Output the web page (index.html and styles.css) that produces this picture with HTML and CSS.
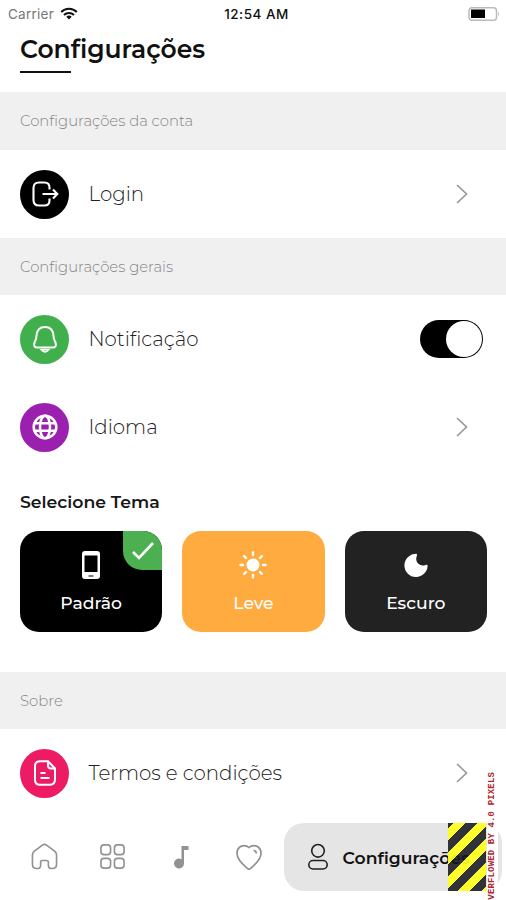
FILE: index.html
```html
<!DOCTYPE html>
<html lang="pt">
<head>
<meta charset="utf-8">
<title>Configurações</title>
<link rel="stylesheet" href="styles.css">
</head>
<body>
<div class="screen">
  <header class="status">
    <div class="carrier"><span>Carrier</span>
      <svg width="18" height="13" viewBox="0 0 18 13"><path d="M1.2 5a11 11 0 0 1 15.6 0M4 8a7 7 0 0 1 10 0" fill="none" stroke="#111" stroke-width="2"/><path d="M6.3 9.8a4 4 0 0 1 5.4 0L9 12.5z" fill="#111"/></svg>
    </div>
    <span class="clock">12:54 AM</span>
    <svg class="battery" width="32" height="14" viewBox="0 0 32 14"><rect x="1" y=".8" width="27.5" height="12.4" rx="3" fill="#fff" stroke="#bbb" stroke-width="1.500"/><rect x="3" y="2.500" width="14" height="8.500" fill="#000"/><path d="M30 5v4q2-2 0-4" fill="#bbb"/></svg>
  </header>
  <div class="heading"><h1>Configurações</h1></div>

  <h2 class="band"><span>Configurações da conta</span></h2>
  <div class="row">
    <span class="dot black"><svg width="30" height="30" viewBox="0 0 30 30"><path d="M19.500 10.500V8.500Q19.500 3.500 14.500 3.500H9Q3.500 3.500 3.500 9v12q0 5.500 5.500 5.500h5.500Q19.500 26.500 19.500 21.500v-2M12.500 15H27M23 10.500l4.300 4.500-4.300 4.500" fill="none" stroke="#fff" stroke-width="2.100"/></svg></span>
    <span class="label">Login</span>
    <svg class="chev" width="12" height="20" viewBox="0 0 12 20"><path d="M1 1l9.500 9L1 19" /></svg>
  </div>

  <h2 class="band short"><span>Configurações gerais</span></h2>
  <div class="row">
    <span class="dot green"><svg width="28" height="30" viewBox="0 0 28 30"><path d="M14 3C8.500 3 5.800 6.500 5.500 12Q5.400 14.800 3.700 18C2.200 21.700 3.200 23.500 7 23.500h14c3.800 0 4.800-1.800 3.300-5.500Q22.600 14.800 22.500 12C22.200 6.500 19.500 3 14 3z" fill="none" stroke="#fff" stroke-width="2"/><path d="M10.300 25.800q3.700 4.400 7.400 0z" fill="none" stroke="#fff" stroke-width="1.600"/></svg></span>
    <span class="label">Notificação</span>
    <span class="switch"><i></i></span>
  </div>
  <div class="row">
    <span class="dot purple"><svg width="26" height="26" viewBox="0 0 26 26"><g fill="none" stroke="#fff" stroke-width="2.500"><circle cx="13" cy="13" r="11.300"/><ellipse cx="13" cy="13" rx="5" ry="11.300"/><path d="M2.500 9.200h21M2.500 16.800h21"/></g></svg></span>
    <span class="label">Idioma</span>
    <svg class="chev" width="12" height="20" viewBox="0 0 12 20"><path d="M1 1l9.500 9L1 19" /></svg>
  </div>

  <h3 class="theme-title"><span>Selecione Tema</span></h3>
  <div class="themes">
    <div class="theme standard">
      <svg width="20" height="30" viewBox="0 0 20 30"><path fill-rule="evenodd" d="M4 1h12q3 0 3 3v22q0 3-3 3H4q-3 0-3-3V4q0-3 3-3zM3.500 5.500v16.500h13V5.500zM7.500 25.500v1h5v-1z" fill="#fff"/></svg>
      <span>Padrão</span>
      <span class="tick"><svg width="22" height="18" viewBox="0 0 22 18"><path d="M1 10l6 6L21 1" fill="none" stroke="#fff" stroke-width="2.600"/></svg></span>
    </div>
    <div class="theme light">
      <svg width="30" height="30" viewBox="0 0 30 30"><circle cx="15" cy="15" r="6.500" fill="#fff"/><path d="M15 2.500v2.500M15 25v2.500M2.500 15h2.500M25 15h2.500M6.200 6.200l1.800 1.800M22 22l1.800 1.800M6.200 23.800l1.800-1.800M22 8l1.800-1.800" stroke="#fff" stroke-width="2.400" stroke-linecap="round"/></svg>
      <span>Leve</span>
    </div>
    <div class="theme dark">
      <svg width="30" height="30" viewBox="0 0 30 30"><path d="M15.500 3.800A11.600 11.600 0 1 0 26.600 15.300Q25.800 14.300 24.500 15Q20.500 16.500 17.300 13.800Q14 10.500 15.800 6Q16.500 4.500 15.500 3.800z" fill="#fff"/></svg>
      <span>Escuro</span>
    </div>
  </div>

  <h2 class="band short"><span>Sobre</span></h2>
  <div class="row">
    <span class="dot pink"><svg width="24" height="26" viewBox="0 0 24 26"><path d="M7 1.200h8L22 8.500V19q0 5.800-5 5.800H7q-5 0-5-5V6.200Q2 1.200 7 1.200zM15 1.200V5.500q0 3 3 3h4M7.500 13h5M7.500 18h9" fill="none" stroke="#fff" stroke-width="2"/></svg></span>
    <span class="label">Termos e condições</span>
    <svg class="chev" width="12" height="20" viewBox="0 0 12 20"><path d="M1 1l9.500 9L1 19" /></svg>
  </div>

  <nav class="tabs">
    <span class="tab"><svg width="27" height="27" viewBox="0 0 28 28"><path d="M11.800 2.200L3.500 8.500Q1.500 10 1.500 12.500V22q0 4.500 4.500 4.500 4 0 4-3.500v-3q0-1.800 1.800-1.800h4.400q1.800 0 1.800 1.800v3q0 3.500 4 3.500 4.500 0 4.500-4.500v-9.500Q26.500 10 24.500 8.500L16.200 2.200Q14 .7 11.800 2.200z"/></svg></span>
    <span class="tab"><svg width="27" height="27" viewBox="0 0 28 28"><rect x="2" y="2" width="10" height="10" rx="3.200"/><rect x="16" y="2" width="10" height="10" rx="3.200"/><rect x="2" y="16" width="10" height="10" rx="3.200"/><rect x="16" y="16" width="10" height="10" rx="3.200"/></svg></span>
    <span class="tab"><svg width="28" height="28" viewBox="0 0 28 28"><path class="solid" d="M14.500 3h7v4h-4.500v13.500A5 5 0 1 1 14.500 16.200z"/></svg></span>
    <span class="tab"><svg width="28" height="28" viewBox="0 0 28 28"><path d="M14 4.500C10 .8 2 2.500 2 10.500 2 17 9 22.500 12.500 25.500q1.500 1.200 3 0C19 22.500 26 17 26 10.500 26 2.500 18 .8 14 4.500zM18.500 7.500q2.500 0 3 3"/></svg></span>
    <div class="active">
      <svg width="22" height="28" viewBox="0 0 22 28"><circle cx="11" cy="7.800" r="6.300"/><rect x="1.800" y="17.500" width="18.400" height="8.500" rx="4.250"/></svg>
      <span>Configurações</span>
      <div class="overflow"><div class="stripes"></div><span class="warning">VERFLOWED BY 4.0 PIXELS</span></div>
    </div>
  </nav>
</div>
</body>
</html>
```
FILE: styles.css
```css
* { box-sizing: border-box; }
body { margin: 0; background: #fff; font-family: Montserrat, Inter, "Open Sans", sans-serif; }
.screen { width: 506px; height: 900px; overflow: hidden; display: flex; flex-direction: column; background: #fff; }
svg { display: block; flex: none; }
span { white-space: nowrap; }
.status { height: 27px; display: grid; grid-template-columns: 1fr auto 1fr; align-items: center; padding: 0 6px 0 8px; font-family: Inter, sans-serif; font-size: 13.5px; flex: none; }
.carrier { display: flex; gap: 6px; align-items: center; color: #777; letter-spacing: .25px; }
.clock { font-weight: 500; color: #111; letter-spacing: .5px; margin-left: 5px; }
.battery { justify-self: end; }
.heading { height: 65px; padding: 5px 20px 0; flex: none; }
h1 { margin: 0; font-size: 25px; line-height: 34px; font-weight: 600; color: #111; }
.heading::after { content: ""; display: block; width: 51px; height: 2px; margin-top: 5px; background: #111; }
.band { height: 58px; margin: 0; padding-left: 20px; display: flex; align-items: center; background: #f0f0f0; color: #858585; font-size: 14.85px; font-weight: 300; flex: none; }
.short { height: 57px; }
.row { height: 88px; padding: 0 38px 0 20px; display: flex; align-items: center; flex: none; }
.dot { width: 49px; height: 49px; border-radius: 50%; display: flex; align-items: center; justify-content: center; }
.black { background: #000; }
.green { background: #41af4b; }
.purple { background: #9c20b0; }
.pink { background: #ec1b64; }
.label { margin: 0 0 1px 19.5px; flex: 1; font-size: 19.8px; font-weight: 300; color: #222; }
.chev { fill: none; stroke: #999; stroke-width: 1.7; }
.switch { width: 63px; height: 38px; margin-right: -15px; padding: 1px; border-radius: 19px; background: #000; display: flex; justify-content: flex-end; }
.switch i { width: 36px; height: 36px; border-radius: 50%; background: #fff; }
.theme-title { height: 60px; margin: 0; padding: 18px 20px 0; font-size: 17.3px; line-height: 26px; font-weight: 600; color: #181818; flex: none; }
.themes { height: 141px; padding: 0 19px 40px 20px; display: grid; grid-template-columns: repeat(3, 1fr); gap: 20px; flex: none; }
.theme { position: relative; border-radius: 19px; overflow: hidden; display: flex; flex-direction: column; align-items: center; padding-top: 19px; gap: 11px; color: #fff; font-size: 17.2px; line-height: 24px; font-weight: 550; }
.standard { background: #000; }
.light { background: #ffab40; }
.dark { background: #222; }
.tick { position: absolute; top: 0; right: 0; width: 39px; height: 39px; background: #4caf50; border-bottom-left-radius: 19px; display: flex; align-items: center; justify-content: center; }
.tabs { height: 83px; padding: 6px 4px 10px 10px; display: flex; flex: none; }
.tab { width: 68.4px; display: flex; align-items: center; justify-content: center; }
.tab svg { fill: none; stroke: #929292; stroke-width: 1.7; }
.tab .solid { fill: #929292; stroke: none; }
.active { position: relative; width: 218px; height: 68px; flex: none; padding-left: 23px; display: flex; align-items: center; gap: 14px; background: #e5e5e5; border-radius: 20px; font-size: 17.2px; font-weight: 600; color: #111; }
.active svg { fill: none; stroke: #222; stroke-width: 1.6; }
.overflow { position: absolute; left: 164px; top: -51px; height: 129px; display: flex; align-items: flex-start; gap: 1px; }
.stripes { width: 38px; height: 68px; margin-top: 51px; background: repeating-linear-gradient(135deg, rgba(20,20,28,.86) 0 4px, rgba(255,255,30,.93) 4px 12.5px, rgba(20,20,28,.86) 12.5px 17px); }
.warning { writing-mode: vertical-rl; transform: rotate(180deg); font-family: "Liberation Mono", monospace; font-size: 9px; line-height: 11px; letter-spacing: .15px; font-weight: 700; color: #ae2630; background: #fff; }
```
